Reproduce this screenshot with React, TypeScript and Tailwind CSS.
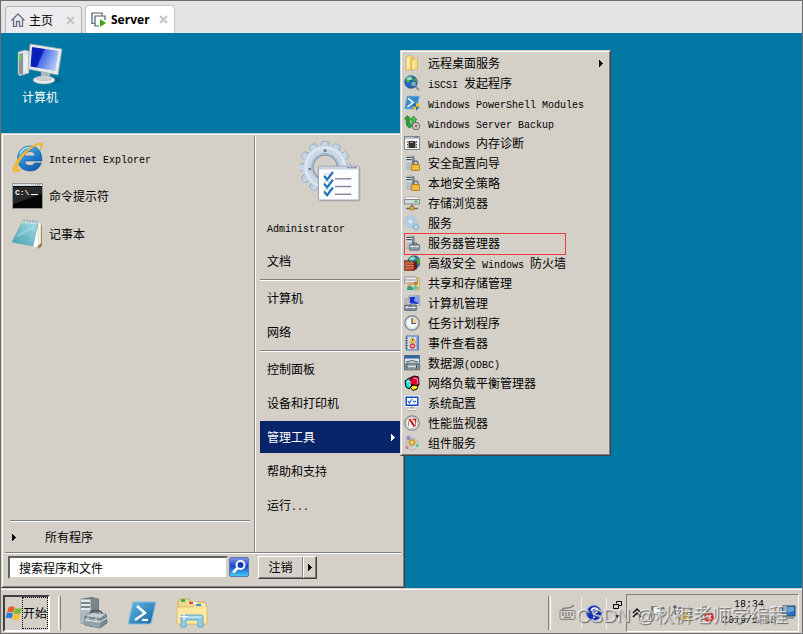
import type { ReactNode } from "react";

type MenuItem = {
  label: string;
  icon: ReactNode;
  submenu?: boolean;
  marked?: boolean;
};

// Latin letters are half as wide as the Chinese ones, as in the classic system font.
function Label({ text }: { text: string }) {
  const parts = text.split(/([\x20-\x7e]+)/).filter(Boolean);
  return (
    <span className="whitespace-pre">
      {parts.map((part, i) =>
        /^[\x20-\x7e]+$/.test(part) ? (
          <span key={i} className="font-['Liberation_Mono','Noto_Sans_CJK_SC',monospace] text-[10px] leading-none">
            {part}
          </span>
        ) : (
          part
        ),
      )}
    </span>
  );
}

function Arrow({ className = "" }: { className?: string }) {
  return (
    <svg viewBox="0 0 4 7" className={`h-[7px] w-1 shrink-0 ${className}`} fill="currentColor" shapeRendering="crispEdges">
      <path d="M0 0h1v1h1v1h1v1h1v1h-1v1h-1v1h-1v1h-1z" />
    </svg>
  );
}

function Small({ children }: { children: ReactNode }) {
  return (
    <svg viewBox="0 0 16 16" className="h-4 w-4 shrink-0">
      {children}
    </svg>
  );
}

function GearShape({ fill, stroke, hole }: { fill: string; stroke: string; hole: string }) {
  const teeth = Array.from({ length: 12 }, (_, i) => i * 30);
  return (
    <g>
      <g fill={fill} stroke={stroke} strokeWidth="0.6">
        {teeth.map((a) => (
          <rect key={a} x="-2" y="-14" width="4" height="6" rx="1" transform={`rotate(${a})`} />
        ))}
      </g>
      <circle r="11.3" fill={fill} stroke={stroke} strokeWidth="0.4" />
      <circle r="6.6" fill={hole} stroke={stroke} strokeWidth="1.4" />
    </g>
  );
}

function TowerShape() {
  return (
    <g>
      <path d="M2 1l6-.5 2.500 1v12l-2.500 1.500-6-1z" fill="#9aa4ac" />
      <path d="M2 1l6 .3v13.200l-6-1z" fill="#b5bfc6" />
      <path d="M2.500 2.500h5M2.500 4.500h5" stroke="#414d55" />
      <path d="M2.500 3.500h5M2.500 6.500h5" stroke="#f1f5f7" strokeWidth="0.8" />
      <path d="M8 1.300l2.500.3v12l-2.500 1z" fill="#7b8790" />
    </g>
  );
}

function LockTower() {
  return (
    <Small>
      <TowerShape />
      <path d="M9 10V8.500a2.500 2.500 0 0 1 5 0V10" fill="none" stroke="#777" strokeWidth="1.500" />
      <rect x="7.500" y="9.500" width="8" height="6" rx="0.5" fill="#e9ae28" stroke="#a87408" strokeWidth="0.7" />
      <path d="M8 11.500h7M8 13.500h7" stroke="#ffd970" strokeWidth="0.6" />
    </Small>
  );
}

function GlobeShape() {
  return (
    <g>
      <circle cx="7" cy="7" r="6.300" fill="#2265c4" stroke="#163e85" strokeWidth="0.6" />
      <path d="M2 4.500C3.500 1.500 6 .8 7.500 1.200L8 3.500 5.500 5.500 5 8 2.500 7z" fill="#48b648" />
      <path d="M9 4l3-1 1.300 3.500L11.500 10 9.500 8z" fill="#41a542" />
      <ellipse cx="5.500" cy="3.500" rx="3" ry="1.500" fill="#d9f3fb" opacity="0.6" />
    </g>
  );
}

const toolItems: MenuItem[] = [
  {
    label: "远程桌面服务",
    submenu: true,
    icon: (
      <Small>
        <path d="M2 1.500l5-1v14l-5 1z" fill="#f8e18b" stroke="#c79f35" strokeWidth="0.6" />
        <path d="M7 1.500h3v12.500l-3 1z" fill="#eac25a" />
        <path d="M8 4.500l5.500-1v10.500L8 15.500z" fill="#f9dd80" stroke="#c79f35" strokeWidth="0.6" />
        <path d="M9 5.500v9M4 2.500v11" stroke="#fff6c8" />
      </Small>
    ),
  },
  {
    label: "iSCSI 发起程序",
    icon: (
      <Small>
        <GlobeShape />
        <circle cx="9.500" cy="9" r="3" fill="#8bc8ed" fillOpacity="0.7" stroke="#34516b" />
        <path d="M11.500 11.500l3.500 3.500" stroke="#82929d" strokeWidth="2" />
      </Small>
    ),
  },
  {
    label: "Windows PowerShell Modules",
    icon: (
      <Small>
        <path d="M3 1h12.500l-2.500 13H.5z" fill="#3a8aca" stroke="#82c0e6" strokeWidth="0.8" />
        <path d="M4 3l5 4.500L3.500 12" stroke="#fff" strokeWidth="1.600" fill="none" />
        <path d="M8.500 9l3.500-1 3.500 1v3.500L12 15.800l-3.500-3.300z" fill="#f4c52f" />
        <path d="M12 8v3.800H8.500V9zM12 11.800h3.500L12 15.800z" fill="#256ac0" />
      </Small>
    ),
  },
  {
    label: "Windows Server Backup",
    icon: (
      <Small>
        <path d="M1 3l5-2 1 3-1 5-4 1z" fill="#a9b4ac" />
        <path d="M2.500 9c0-3 0-4.500-2-5.500L3.500.5 6 4 4.500 4.500C6 7 5.500 9 8 11L6 13C3.500 12 2.500 11 2.500 9z" fill="#26a534" stroke="#08701a" strokeWidth="0.6" />
        <path d="M8 10V5H6.500l3-4 3.500 4h-1.500v5z" fill="#42c246" stroke="#08701a" strokeWidth="0.6" />
        <circle cx="12" cy="11" r="3.700" fill="#c7c7c7" stroke="#6b6b6b" />
        <circle cx="12" cy="11" r="1.200" fill="#c24a54" />
      </Small>
    ),
  },
  {
    label: "Windows 内存诊断",
    icon: (
      <Small>
        <rect x="0.5" y="1.500" width="15" height="13" fill="#f6f6f6" stroke="#80858a" />
        <path d="M1 3h14" stroke="#b8c5d1" strokeWidth="2" />
        <path d="M10 2.500h4" stroke="#68717a" strokeDasharray="1 .6" />
        <rect x="4.500" y="6" width="7" height="7" fill="#343434" />
        <path d="M3 7h10M3 9.500h10M3 12h10" stroke="#343434" strokeDasharray="1 8" />
        <path d="M12 7h1M12 9.500h1M12 12h1" stroke="#343434" />
        <path d="M6 7.500h3" stroke="#a2a2a2" />
      </Small>
    ),
  },
  { label: "安全配置向导", icon: <LockTower /> },
  { label: "本地安全策略", icon: <LockTower /> },
  {
    label: "存储浏览器",
    icon: (
      <Small>
        <path d="M1.500 2h13l1 2.500H.5z" fill="#f8f9fa" stroke="#999" strokeWidth="0.6" />
        <path d="M.5 4.500h15V9H.5z" fill="#d5d9dc" stroke="#666d72" strokeWidth="0.7" />
        <path d="M10.500 6.500h3" stroke="#2fc93b" strokeWidth="1.800" />
        <path d="M8 9v3M2 13.500h12" stroke="#626c73" strokeWidth="1.300" />
        <rect x="6" y="11.500" width="4" height="3.500" fill="#e6a72b" stroke="#94650d" strokeWidth="0.5" />
      </Small>
    ),
  },
  {
    label: "服务",
    icon: (
      <Small>
        <g transform="translate(6.500 6.500) scale(.44)">
          <GearShape fill="#b9d7ed" stroke="#7daac9" hole="#e4e3df" />
        </g>
        <g transform="translate(12 12) scale(.25)">
          <GearShape fill="#9fc3df" stroke="#6b99bc" hole="#e4e3df" />
        </g>
      </Small>
    ),
  },
  {
    label: "服务器管理器",
    marked: true,
    icon: (
      <Small>
        <TowerShape />
        <path d="M8.500 9.500V8h4v1.500" fill="none" stroke="#4c5962" />
        <rect x="5.500" y="9.500" width="10" height="5.800" rx="0.7" fill="#8b9aa4" stroke="#53626d" strokeWidth="0.7" />
        <path d="M6 11.500h9M8 10.500v2M13 10.500v2" stroke="#d6e0e6" />
      </Small>
    ),
  },
  {
    label: "高级安全 Windows 防火墙",
    icon: (
      <Small>
        <g transform="translate(3)">
          <GlobeShape />
        </g>
        <path d="M.5 5.500L10 7v8.500H.5z" fill="#a83a27" stroke="#68190c" strokeWidth="0.6" />
        <path d="M10 7l3-1v8l-3 1.500z" fill="#75190e" />
        <path d="M.5 8h9.500M.5 10.500h9.500M.5 13h9.500M4 6v2M7.500 6.500V8M2.500 8v2.500M6 8v2.500M4 10.500V13M8 10.500V13M2.500 13v2.500M6 13v2.500" stroke="#e29a79" strokeWidth="0.6" />
      </Small>
    ),
  },
  {
    label: "共享和存储管理",
    icon: (
      <Small>
        <path d="M8 3h7.500v12H8z" fill="#f5d773" stroke="#c09b3c" strokeWidth="0.6" />
        <path d="M1 2h11l1.500 2.500V8H.5V4.500z" fill="#e8eaec" stroke="#777" strokeWidth="0.7" />
        <path d="M.5 5h12.500" stroke="#909ba3" />
        <circle cx="6" cy="9" r="2" fill="#dfa476" />
        <circle cx="11.500" cy="8.500" r="2" fill="#bd7d4f" />
        <path d="M3 15q0-5 3-4t3 4z" fill="#2c9d88" />
        <path d="M9 14.500q0-4.500 2.500-4t3 4z" fill="#5dbdc2" />
      </Small>
    ),
  },
  {
    label: "计算机管理",
    icon: (
      <Small>
        <path d="M4.500 1L15.500.5v10L5 9.500z" fill="#e6e9ec" stroke="#78838c" strokeWidth="0.6" />
        <path d="M5.500 2L14.500 1.500v7.500L6 8.500z" fill="#182dcb" />
        <path d="M11 2l3.500-.5V8L10 6z" fill="#83a6f5" />
        <path d="M1 4l2-.5v7L1 11z" fill="#c9ced3" stroke="#777" strokeWidth="0.5" />
        <rect x="0.5" y="10" width="12" height="5.500" rx="0.5" fill="#778792" stroke="#495862" strokeWidth="0.6" />
        <path d="M1 12.500h11M3 11v2.500M9.500 11v2.500" stroke="#dce4ea" />
      </Small>
    ),
  },
  {
    label: "任务计划程序",
    icon: (
      <Small>
        <circle cx="8" cy="8" r="7.200" fill="#e9eef5" stroke="#858c95" strokeWidth="1.500" />
        <circle cx="8" cy="8" r="5.500" fill="#f7fafc" stroke="#c5cad0" strokeWidth="0.6" />
        <path d="M8 8V3a5 5 0 0 1 5 5z" fill="#f5d58d" />
        <path d="M8 3v5.500h4" fill="none" stroke="#3c536e" strokeWidth="1.200" />
      </Small>
    ),
  },
  {
    label: "事件查看器",
    icon: (
      <Small>
        <rect x="2.500" y="1" width="12" height="14" fill="#cbdcf5" stroke="#4773ad" />
        <path d="M13.500 1.500v13" stroke="#668dc9" strokeWidth="2" />
        <path d="M1 3h3M1 5.500h3M1 8h3M1 10.500h3M1 13h3" stroke="#63717c" />
        <path d="M8.500 2l3.500 5.500H5.500z" fill="#ffd63c" stroke="#c38c08" strokeWidth="0.5" />
        <path d="M8.700 4v2" stroke="#333" />
        <circle cx="8.500" cy="11" r="2.800" fill="#dc3131" />
        <path d="M7.300 9.800l2.400 2.400M9.700 9.800l-2.400 2.400" stroke="#fff" />
      </Small>
    ),
  },
  {
    label: "数据源(ODBC)",
    icon: (
      <Small>
        <rect x="0.5" y="0.5" width="15" height="14" fill="#dce4e8" stroke="#597390" />
        <path d="M1 2h14" stroke="#31649c" strokeWidth="3" />
        <path d="M2 7q6-3 12 0" stroke="#52636b" fill="none" />
        <path d="M2 8h12l1.500 2v5H.5v-5z" fill="#81939b" stroke="#53666e" strokeWidth="0.6" />
        <path d="M3 11.500h10" stroke="#d7e2e5" strokeWidth="1.500" />
        <path d="M3 9.500v4M12.500 9.500v4" stroke="#405058" />
      </Small>
    ),
  },
  {
    label: "网络负载平衡管理器",
    icon: (
      <Small>
        <path d="M1 6l4-3 3 1v6l-3 4-3-2z" fill="#0ee0e5" stroke="#000" />
        <path d="M6 3l4-2 4.500 1 .5 8-4 1-5-2z" fill="#e1002d" stroke="#000" />
        <path d="M9.500 3l4 1v5" fill="none" stroke="#ff65b4" strokeWidth="1.500" />
        <path d="M6 12l4-2 4 1-1 3-4 1.500z" fill="#f9ef22" stroke="#000" />
        <path d="M3 7l3-1v5" fill="none" stroke="#fff" />
      </Small>
    ),
  },
  {
    label: "系统配置",
    icon: (
      <Small>
        <rect x="1" y="1" width="14" height="10.500" fill="#1548c7" stroke="#edf1f5" />
        <rect x="3" y="3" width="10" height="6.500" fill="#fff" />
        <path d="M4 6l1.500 2L8 4M9 6.500h3" fill="none" stroke="#3477c4" strokeWidth="1.300" />
        <path d="M6.500 12h3v1.500h-3z" fill="#999" />
        <path d="M3.500 14.500h9" stroke="#f2f2f2" strokeWidth="1.500" />
        <path d="M3.500 15.500h9" stroke="#9a9a9a" strokeWidth="0.6" />
      </Small>
    ),
  },
  {
    label: "性能监视器",
    icon: (
      <Small>
        <circle cx="8" cy="8" r="7.200" fill="#f8f8f8" stroke="#858585" strokeWidth="1.300" />
        <circle cx="8" cy="8" r="5.500" fill="none" stroke="#c5c5c5" />
        <path d="M4.500 11V6M11.500 11V7" stroke="#777" strokeWidth="0.8" />
        <path d="M5.500 4l5 7.500" stroke="#d11717" strokeWidth="2.200" />
        <path d="M8.500 4.500h3v3" fill="none" stroke="#d11717" strokeWidth="1.400" />
      </Small>
    ),
  },
  {
    label: "组件服务",
    icon: (
      <Small>
        <circle cx="8" cy="9" r="6" fill="#ccced2" stroke="#b5b7b9" />
        <circle cx="4.500" cy="3" r="2.200" fill="#898fd6" />
        <circle cx="13.500" cy="10.500" r="1.700" fill="#51bd62" stroke="#d7eddb" strokeWidth="0.6" />
        <circle cx="3" cy="12.500" r="1.500" fill="#df7475" />
        <g transform="translate(8 7.500) scale(.25)">
          <GearShape fill="#eaaf23" stroke="#8a5600" hole="#ffe6a0" />
        </g>
      </Small>
    ),
  },
];

const placeGroups = [
  ["Administrator", "文档"],
  ["计算机", "网络"],
  ["控制面板", "设备和打印机", "管理工具", "帮助和支持", "运行..."],
];

function ComputerIcon() {
  return (
    <svg viewBox="0 0 46 42" className="h-[42px] w-[46px]">
      <defs>
        <linearGradient id="screen" x1="0" y1="0" x2="1" y2="0.4">
          <stop offset="0" stopColor="#0b22c4" />
          <stop offset="0.45" stopColor="#1029c8" />
          <stop offset="0.5" stopColor="#4a6de6" />
          <stop offset="1" stopColor="#a8c3f7" />
        </linearGradient>
      </defs>
      <ellipse cx="32" cy="37" rx="13" ry="3.500" fill="#064f6e" opacity="0.5" />
      <path d="M1 9l7-2 4 1v22l-9 3-2-2z" fill="#dfe2e3" stroke="#8c989c" strokeWidth="0.6" />
      <path d="M2 11l4-1v22l-4-1z" fill="#8b979b" />
      <path d="M3 12v5" stroke="#49e724" strokeWidth="2" />
      <path d="M8 12v17M10 12v16" stroke="#fafafa" />
      <path d="M24 28l9 2v6l-9-1z" fill="#aeb8bd" />
      <ellipse cx="27" cy="37" rx="11" ry="4" fill="#e8eaeb" stroke="#9aa6ab" strokeWidth="0.6" />
      <ellipse cx="27" cy="36" rx="8" ry="2" fill="#c4ccd0" />
      <path d="M13 1l32 5-4 26-30-6z" fill="#e7e9ea" stroke="#9ea7ab" strokeWidth="0.7" />
      <path d="M15 4l26.500 4-3.500 20-24.500-4.500z" fill="url(#screen)" />
      <path d="M16 5l10 1.500-6 17-5.500-1z" fill="#061ca8" opacity="0.6" />
    </svg>
  );
}

function ExplorerIcon() {
  return (
    <svg viewBox="0 0 32 32" className="h-8 w-8 shrink-0">
      <defs>
        <linearGradient id="ie" x1="0" y1="0" x2="0.7" y2="1">
          <stop offset="0" stopColor="#72cdf6" />
          <stop offset="0.55" stopColor="#2285d5" />
          <stop offset="1" stopColor="#125ca9" />
        </linearGradient>
      </defs>
      <path
        d="M30 19H12.500c.5 3 2.500 4.500 5.500 4.500 2.300 0 3.800-.8 4.700-2.500h6.500C27.500 26.500 23.500 29 18 29 10.500 29 5.500 24 5.500 16.500S10.800 4 18 4s12.200 5 12 15zM12.500 14h10.800c-.4-3-2.300-4.500-5.300-4.500s-5 1.500-5.500 4.500z"
        fill="url(#ie)"
        stroke="#0b559e"
        strokeWidth="0.6"
      />
      <path d="M8 12C10 7 15 5 20 5.500" stroke="#c1edff" strokeWidth="1.400" fill="none" opacity="0.8" />
      <path d="M28.500 8.500c2.500-5.500 3-7.500.5-7.500C22 1 9 11 4 20c-4 7-4 10-.5 10 2 0 4.500-1.500 6.500-3-5.500 2.500-6-.5-3-6.500C12 11.500 21.500 4 27 2.600c2.500-.5 2 2.400 1.500 5.900z" fill="#f8bd31" stroke="#da951c" strokeWidth="0.4" />
    </svg>
  );
}

function PromptIcon() {
  return (
    <svg viewBox="0 0 32 32" className="h-8 w-8 shrink-0">
      <rect x="0.5" y="3.500" width="30" height="25" fill="#050505" stroke="#8f989e" />
      <path d="M1 5h29" stroke="#d4dce2" strokeWidth="2" />
      <path d="M23 5h6" stroke="#687a8c" strokeDasharray="1 1" />
      <path d="M1 7h29v7L1 24z" fill="#555" opacity="0.45" />
      <text x="3" y="15" fill="#fff" fontSize="8" fontWeight="bold" fontFamily="Liberation Mono, monospace">
        C:\
      </text>
      <path d="M19 14.500h7" stroke="#fff" />
    </svg>
  );
}

function NotepadIcon() {
  return (
    <svg viewBox="0 0 32 32" className="h-8 w-8 shrink-0">
      <path d="M26 4l4 3v21l-4 3z" fill="#a27a3b" />
      <path d="M26 4l3 1v20l-5 5z" fill="#f5f3e9" stroke="#c4bea8" strokeWidth="0.5" />
      <path d="M25 4l2 22-4 4-5-3z" fill="#fff" stroke="#b4c5ca" strokeWidth="0.5" />
      <linearGradient id="pad" x1="1" y1="0" x2="0" y2="1">
        <stop offset="0" stopColor="#a9e0e6" />
        <stop offset="1" stopColor="#439eb0" />
      </linearGradient>
      <path d="M11 3l15 1-5 24L0 24z" fill="url(#pad)" stroke="#61a0ac" strokeWidth="0.6" />
      <path d="M11 3l15 1-.5 2L10 5z" fill="#dbe9e9" />
      <path d="M12 1.500v3M15 1.500v3M18 2v3M21 2v3M24 2.500v3" stroke="#8d9ea3" />
      <path d="M5 18L22 9" stroke="#cff1f2" strokeWidth="2" opacity="0.35" />
    </svg>
  );
}

function ToolsPicture() {
  return (
    <svg viewBox="0 0 64 64" className="h-[62px] w-[62px]">
      <linearGradient id="gear" x1="0" y1="0" x2="1" y2="1">
        <stop offset="0" stopColor="#dce7f2" />
        <stop offset="0.5" stopColor="#c3d3e2" />
        <stop offset="1" stopColor="#91b9e1" />
      </linearGradient>
      <g transform="translate(26 27)">
        <g fill="url(#gear)" stroke="#8fa5b8" strokeWidth="0.8">
          {[0, 30, 60, 90, 120, 150, 180, 210, 240, 270, 300, 330].map((a) => (
            <path key={a} d="M-4.500-20L-3.500-26Q0-28 3.500-26L4.500-20z" transform={`rotate(${a})`} />
          ))}
        </g>
        <circle r="17.500" fill="none" stroke="#c9d9e8" strokeWidth="10" />
        <circle r="12.500" fill="none" stroke="#8b9cac" strokeWidth="1.500" />
        <circle r="14.500" fill="none" stroke="#a9b7c6" strokeWidth="1" />
        <circle r="20" fill="none" stroke="#dfe9f2" strokeWidth="2" />
        <circle cx="0" cy="-17" r="1.500" fill="#687786" />
        <circle cx="-16" cy="2" r="1.500" fill="#687786" />
      </g>
      <rect x="20.500" y="27.500" width="42" height="35" rx="1" fill="#a3a2a0" opacity="0.5" />
      <rect x="19" y="26" width="42" height="35" rx="1" fill="#fbfcfd" stroke="#8d98a6" />
      <path d="M19.500 28h41" stroke="#cbd4df" strokeWidth="3" />
      <path d="M49 27.500h10" stroke="#6f7b91" strokeWidth="1.500" strokeDasharray="2 1.500" />
      {[37, 45, 53].map((y) => (
        <g key={y}>
          <rect x="25" y={y - 3} width="5" height="5" fill="#fff" stroke="#b9c4d0" strokeWidth="0.7" />
          <path d={`M25 ${y - 1}l3 4 6-8`} fill="none" stroke="#1e75bb" strokeWidth="2.200" />
          <path d={`M36 ${y + 2}h17`} stroke="#8e87a4" strokeWidth="1.500" />
        </g>
      ))}
    </svg>
  );
}

function SearchIcon() {
  return (
    <svg viewBox="0 0 20 20" className="h-5 w-5">
      <defs>
        <linearGradient id="find" x1="0" y1="0" x2="0" y2="1">
          <stop offset="0" stopColor="#8798e6" />
          <stop offset="0.45" stopColor="#1644ce" />
          <stop offset="1" stopColor="#46d1f2" />
        </linearGradient>
      </defs>
      <rect x="0.5" y="0.5" width="19" height="19" rx="1.500" fill="url(#find)" stroke="#5879ae" />
      <circle cx="11.500" cy="8" r="4" fill="#1539b3" stroke="#fff" strokeWidth="2" />
      <path d="M8.500 11l-4.500 4.500" stroke="#fff" strokeWidth="2.500" />
    </svg>
  );
}

function WindowsLogo() {
  return (
    <svg viewBox="0 0 16 16" className="h-4 w-4 shrink-0">
      <path d="M2.500 2.500Q5.500.3 8.500 2.300L7.300 7.800Q4.500 5.800 1 7.500z" fill="#e4602a" />
      <path d="M9 2.700q3.500 1.800 7 0l-1.500 5.500Q11 10 7.800 8.200z" fill="#7eb93e" />
      <path d="M.8 8Q4 6.600 7 8.400l-1.400 5.200Q3 11.800-.5 13.500z" fill="#2e7fd1" />
      <path d="M7.700 8.800q3.300 1.800 6.500.2l-1.500 5.200q-3.200 1.500-6.400-.2z" fill="#f7bf2c" />
    </svg>
  );
}

function ServerManagerIcon() {
  return (
    <svg viewBox="0 0 32 32" className="h-8 w-8">
      <path d="M2 2l12-2 7 2v22l-7 6-12-4z" fill="#6a757b" />
      <path d="M2 2h11v27L2 26z" fill="#aeb8bd" />
      <path d="M13 2l7-1v22l-7 6z" fill="#7b858a" />
      <path d="M3 4h9M3 8h9M3 12h9" stroke="#e3e9eb" strokeWidth="2" />
      <path d="M3 6h9M3 10h9" stroke="#485358" />
      <path d="M12 18q0-5 6-4.500t6 3" fill="none" stroke="#465157" strokeWidth="1.500" />
      <path d="M7 19l7-3 14 1 1 9-7 5-15-3z" fill="#798990" stroke="#4d5c63" strokeWidth="0.7" />
      <path d="M7 19l7-3 14 1-6 4z" fill="#c2cfd4" />
      <path d="M7 21l15 2v8L7 28z" fill="#95a3a9" />
      <path d="M10 20v4M18 21v4M7 23l15 2 7-4" stroke="#e2eaed" fill="none" />
    </svg>
  );
}

function PowerShellIcon() {
  return (
    <svg viewBox="0 0 30 26" className="h-[26px] w-[30px]">
      <linearGradient id="ps" x1="0" y1="0" x2="1" y2="1">
        <stop offset="0" stopColor="#67b7e4" />
        <stop offset="1" stopColor="#14659f" />
      </linearGradient>
      <path d="M7 2h20q2 0 1.500 2l-4 18q-.5 2-2.500 2H3q-2 0-1.500-2l4-18Q5.500 2 7 2z" fill="url(#ps)" stroke="#83bfe1" strokeWidth="1.200" />
      <path d="M10 6l8 7-10 7" fill="none" stroke="#fff" strokeWidth="2.400" />
      <path d="M15 20h6" stroke="#fff" strokeWidth="2.200" />
    </svg>
  );
}

function FoldersIcon() {
  return (
    <svg viewBox="0 0 32 30" className="h-[30px] w-8">
      <path d="M2 3l3-2h8l2 3h14l1 3v19H2z" fill="#eed785" stroke="#c8a84f" strokeWidth="0.7" />
      <path d="M5 2.500h4" stroke="#19ae4c" strokeWidth="2.500" />
      <path d="M11 6l2-2h7l2 2z" fill="#fff" />
      <path d="M13 5h4" stroke="#df402c" strokeWidth="2" />
      <path d="M18 8l2-2h9l1 2z" fill="#fff" />
      <path d="M20 7h5" stroke="#2d87dc" strokeWidth="2" />
      <path d="M1 9h15l2-1h13v18H1z" fill="#fae99f" stroke="#cfb563" strokeWidth="0.7" />
      <path d="M5 29V19q0-2 2-2h18q2 0 2 2v10h-5v-7H10v7z" fill="#94cce8" stroke="#559ebe" strokeWidth="0.8" />
      <path d="M6 19h20" stroke="#d7f2ff" />
      <path d="M8 15v7M4.500 18.500h7" stroke="#fff" />
    </svg>
  );
}

function CloseTab() {
  return (
    <button aria-label="关闭" className="mr-1.5 ml-auto">
      <svg viewBox="0 0 9 9" className="h-[9px] w-[9px]" stroke="#c4c4c4" strokeWidth="2">
        <path d="M1 1l7 7M8 1L1 8" />
      </svg>
    </button>
  );
}

function TabBar() {
  return (
    <nav className="flex h-8 items-end gap-[3px] bg-[#e4e4e7] pl-1">
      <div className="flex h-[27px] w-[77px] items-center rounded-t border border-b-0 border-[#b5b5b8] bg-[#ececef] pl-[5px]">
        <svg viewBox="0 0 14 14" className="h-3.5 w-3.5" fill="none" stroke="#657181" strokeWidth="1.300">
          <path d="M.5 7.500L7 1l6.500 6.500M2.500 6v7.300H5.500V8.500h3v4.800h3V6" />
        </svg>
        <button className="ml-1">主页</button>
        <CloseTab />
      </div>
      <div className="flex h-7 w-[90px] items-center rounded-t border border-b-0 border-[#c4c4c7] bg-white pl-[5px]">
        <svg viewBox="0 0 16 16" className="h-4 w-4" fill="none" stroke="#4e5e6c" strokeWidth="1.200">
          <path d="M3.500 11.500H1V1h10v2.500" />
          <path d="M8 14H4V4h10v4" />
          <path d="M9 7l6 4-6 4z" fill="#43a316" stroke="none" />
        </svg>
        <button className="ml-1 font-['Noto_Sans','Noto_Sans_CJK_SC',sans-serif] font-bold">Server</button>
        <CloseTab />
      </div>
    </nav>
  );
}

function ToolsMenu() {
  return (
    <div className="absolute top-[17px] left-[399px] w-[211px] border border-t-[#d4d0c8] border-r-[#404040] border-b-[#404040] border-l-[#d4d0c8] bg-[#d4d0c8]">
      <ul className="border border-t-white border-r-[#808080] border-b-[#808080] border-l-white p-px">
        {toolItems.map((item) => (
          <li key={item.label} className="relative">
            <button className="flex h-5 w-full items-center pr-[5px] pl-px text-left">
              {item.icon}
              <span className="ml-2">
                <Label text={item.label} />
              </span>
              {item.submenu && <Arrow className="ml-auto" />}
            </button>
            {item.marked && <span className="absolute top-0 left-px h-[22px] w-[162px] border border-[#f03c3c]" />}
          </li>
        ))}
      </ul>
    </div>
  );
}

function Rule({ className = "" }: { className?: string }) {
  return <hr className={`h-0.5 border-t border-b border-t-[#808080] border-b-white ${className}`} />;
}

function StartMenu() {
  return (
    <section className="absolute bottom-0 left-0 w-[404px] border border-t-[#d4d0c8] border-r-[#404040] border-b-[#404040] border-l-[#d4d0c8] bg-[#d4d0c8]">
      <div className="border border-t-white border-r-[#808080] border-b-[#808080] border-l-white">
        <div className="flex">
          <div className="flex w-[251px] flex-col pt-1">
            {[
              { label: "Internet Explorer", icon: <ExplorerIcon /> },
              { label: "命令提示符", icon: <PromptIcon /> },
              { label: "记事本", icon: <NotepadIcon /> },
            ].map((app) => (
              <button key={app.label} className="flex h-[38px] items-center gap-[5px] pl-[9px] text-left">
                {app.icon}
                <Label text={app.label} />
              </button>
            ))}
            <Rule className="mr-1 ml-[7px] mt-auto" />
            <button className="flex h-[30px] items-center pl-[9px] text-left">
              <Arrow />
              <span className="ml-[29px]">所有程序</span>
            </button>
          </div>
          <div className="mt-px flex-1 border-l border-[#808080]">
            <div className="border-l border-white pb-[30px] pl-1">
              <div className="flex h-[74px] items-start pt-[5px] pl-10">
                <ToolsPicture />
              </div>
              {placeGroups.map((group, i) => (
                <div key={group[0]}>
                  {i > 0 && <Rule className="mt-px" />}
                  {group.map((label) => (
                    <div key={label} className="h-[34px] py-px">
                      <button
                        className={`flex h-8 w-full items-center justify-between pr-2 pl-[7px] text-left ${
                          label === "管理工具" ? "bg-[#0a246a] text-white" : ""
                        }`}
                      >
                        <Label text={label} />
                        {label === "管理工具" && <Arrow />}
                      </button>
                    </div>
                  ))}
                </div>
              ))}
            </div>
          </div>
        </div>
        <Rule className="mx-0.5" />
        <div className="flex h-8 items-start pt-0.5 pl-[5px]">
          <input
            aria-label="搜索程序和文件"
            defaultValue="搜索程序和文件"
            className="h-[23px] w-[220px] border-2 border-t-[#606060] border-r-[#d4d0c8] border-b-[#d4d0c8] border-l-[#606060] bg-white pl-[9px] outline-none"
          />
          <button aria-label="搜索" className="mt-px ml-px">
            <SearchIcon />
          </button>
          <div className="ml-[9px] flex border border-t-white border-r-[#404040] border-b-[#404040] border-l-white">
            <button className="h-[21px] w-[44px] border-r border-b border-[#808080]">注销</button>
            <button aria-label="更多" className="flex h-[21px] w-[13px] items-center justify-center border-r border-b border-l border-r-[#808080] border-b-[#808080] border-l-white">
              <Arrow />
            </button>
          </div>
        </div>
      </div>
    </section>
  );
}

function TrayIcons() {
  return (
    <svg viewBox="0 0 84 20" className="h-5 w-[84px]">
      <path d="M2 10l4-4 4 4M2 14l4-4 4 4" stroke="#111" strokeWidth="1.500" fill="none" />
      <path d="M21 3v15" stroke="#5d6469" strokeWidth="1.500" />
      <path d="M22 4q4-2 6 1t5 0v8q-4 1-6-1t-5 0z" fill="#f4f4f4" stroke="#73777b" />
      <path d="M44 2v7q0 3 4 3v5M42 4h4M48 5h12v9H48z" fill="#f4f4f4" stroke="#555b61" strokeWidth="1.300" />
      <path d="M54 7l6 10H48z" fill="#f6ce28" stroke="#bd930e" />
      <path d="M54 10v4M54 15v1" stroke="#222" />
      <path d="M70 7l5-4v14l-5-4h-2V7z" fill="#e6e6e6" stroke="#777" />
      <circle cx="78" cy="14" r="5" fill="#d92c2c" />
      <path d="M76 12l4 4M80 12l-4 4" stroke="#fff" strokeWidth="1.500" />
    </svg>
  );
}

function Taskbar() {
  return (
    <footer className="relative flex h-[45px] items-center border-t border-t-[#d4d0c8] bg-[#d4d0c8] shadow-[inset_0_1px_0_white]">
      <button className="mt-1 ml-0.5 flex h-[37px] w-[47px] items-center border-2 border-t-[#404040] border-r-white border-b-white border-l-[#404040] pl-px">
        <WindowsLogo />
        <span className="flex h-8 w-[26px] items-center justify-center border border-dotted border-black">开始</span>
      </button>
      <span className="mt-1 ml-2 h-[34px] w-[3px] border-r border-l border-r-[#808080] border-l-white" />
      <div className="mt-1 flex items-center pl-[17px]">
        <button aria-label="服务器管理器">
          <ServerManagerIcon />
        </button>
        <button aria-label="PowerShell" className="ml-[17px]">
          <PowerShellIcon />
        </button>
        <button aria-label="资源管理器" className="ml-[19px]">
          <FoldersIcon />
        </button>
      </div>
      <div className="mt-1 ml-auto flex items-center pr-[3px]">
        <span className="h-[34px] w-[3px] border-r border-l border-r-white border-l-[#808080]" />
        <svg viewBox="0 0 18 16" className="ml-2 h-4 w-[18px]" fill="none" stroke="#858585">
          <path d="M3 5Q4 3 8 3t7-3" strokeWidth="1.500" />
          <rect x="1" y="5.500" width="15" height="9" rx="1" />
          <path d="M3 8h12M3 10h12" strokeDasharray="2 1" strokeWidth="1.500" />
          <path d="M5 12.500h7" strokeWidth="1.500" />
        </svg>
        <span className="ml-1 h-8 w-px bg-[#f0efeb]" />
        <svg viewBox="0 0 16 16" className="ml-1 h-4 w-4">
          <circle cx="8" cy="8" r="7.500" fill="#122eb6" stroke="#7085da" />
          <path d="M5.500 6q0-3 3-3t3 2.300q0 1.500-2 2.300-1.500.6-1.500 2M8 11.500V13" stroke="#fff" strokeWidth="1.700" fill="none" />
        </svg>
        <span className="ml-1 h-8 w-px bg-[#f0efeb]" />
        <svg viewBox="0 0 9 28" className="ml-1.5 h-7 w-[9px]">
          <path d="M3.500 4.500v-2h5v4h-3M.5 5.500h5v4h-5z" fill="none" stroke="#000" />
          <path d="M1 16h6l-3 3z" />
        </svg>
        <div className="ml-1 flex h-[38px] w-[173px] items-center border border-t-[#808080] border-r-white border-b-white border-l-[#808080] pl-1">
          <TrayIcons />
          <div className="ml-px w-[66px] text-center font-['Liberation_Mono',monospace] text-[10px] leading-4">
            <div>18:34</div>
            <div>2019/6/13</div>
          </div>
          <svg viewBox="0 0 14 16" className="h-4 w-3.5">
            <rect x="0" y="1" width="13" height="10" fill="#2373c9" stroke="#2b445f" />
            <path d="M1 2h11v4L1 9z" fill="#62a5e6" />
            <path d="M1 10h3" stroke="#f8cd35" strokeWidth="2" />
            <path d="M3 13h9" stroke="#5b656e" />
          </svg>
        </div>
      </div>
      <div className="pointer-events-none absolute right-3.5 bottom-[3px] font-['Liberation_Sans','Noto_Sans_CJK_SC',sans-serif] text-[19px] leading-7 whitespace-nowrap text-white/60 [text-shadow:1px_1px_1px_#666]">
        CSDN @秋裤老师学编程
      </div>
    </footer>
  );
}

export default function App() {
  return (
    <main className="flex min-h-screen flex-col border border-[#6c6c6c] bg-[#0078a4] font-['Noto_Sans_CJK_SC',sans-serif] text-xs text-black">
      <TabBar />
      <div className="relative flex-1">
        <button className="mt-2.5 ml-[15px] flex w-12 flex-col items-center text-white">
          <ComputerIcon />
          <span className="mt-1">计算机</span>
        </button>
        <StartMenu />
        <ToolsMenu />
      </div>
      <Taskbar />
    </main>
  );
}
